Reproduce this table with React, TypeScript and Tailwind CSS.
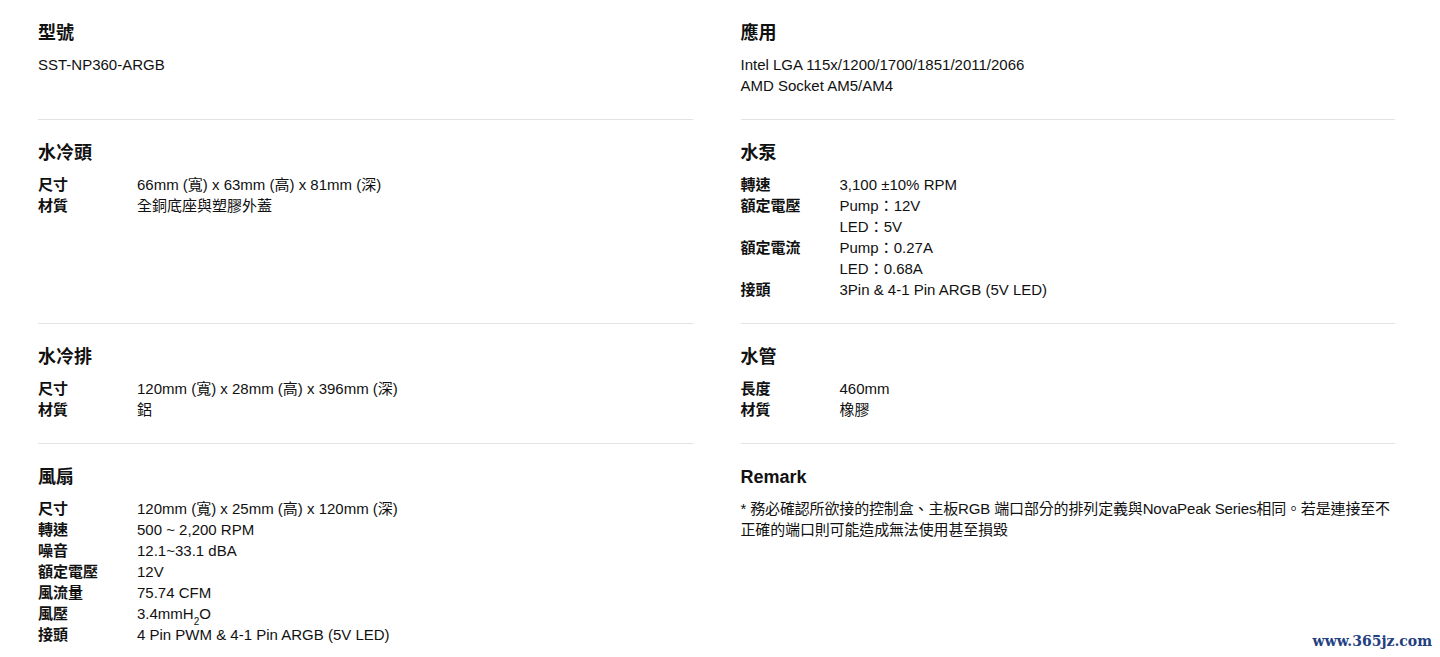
import React from 'react';

type Spec = { label?: string; value: React.ReactNode };
type Section = { title: string; specs?: Spec[]; lines?: React.ReactNode[]; tight?: boolean };

const rows: [Section, Section][] = [
  [
    { title: '型號', lines: ['SST-NP360-ARGB'] },
    { title: '應用', lines: ['Intel LGA 115x/1200/1700/1851/2011/2066', 'AMD Socket AM5/AM4'] },
  ],
  [
    {
      title: '水冷頭',
      specs: [
        { label: '尺寸', value: '66mm (寬) x 63mm (高) x 81mm (深)' },
        { label: '材質', value: '全銅底座與塑膠外蓋' },
      ],
    },
    {
      title: '水泵',
      specs: [
        { label: '轉速', value: '3,100 ±10% RPM' },
        { label: '額定電壓', value: 'Pump：12V' },
        { value: 'LED：5V' },
        { label: '額定電流', value: 'Pump：0.27A' },
        { value: 'LED：0.68A' },
        { label: '接頭', value: '3Pin & 4-1 Pin ARGB (5V LED)' },
      ],
    },
  ],
  [
    {
      title: '水冷排',
      specs: [
        { label: '尺寸', value: '120mm (寬) x 28mm (高) x 396mm (深)' },
        { label: '材質', value: '鋁' },
      ],
    },
    {
      title: '水管',
      specs: [
        { label: '長度', value: '460mm' },
        { label: '材質', value: '橡膠' },
      ],
    },
  ],
  [
    {
      title: '風扇',
      specs: [
        { label: '尺寸', value: '120mm (寬) x 25mm (高) x 120mm (深)' },
        { label: '轉速', value: '500 ~ 2,200 RPM' },
        { label: '噪音', value: '12.1~33.1 dBA' },
        { label: '額定電壓', value: '12V' },
        { label: '風流量', value: '75.74 CFM' },
        {
          label: '風壓',
          value: (
            <>
              3.4mmH<sub className="text-[10px] leading-none align-[-3px]">2</sub>O
            </>
          ),
        },
        { label: '接頭', value: '4 Pin PWM & 4-1 Pin ARGB (5V LED)' },
      ],
    },
    {
      title: 'Remark',
      tight: true,
      lines: ['* 務必確認所欲接的控制盒、主板RGB 端口部分的排列定義與NovaPeak Series相同。若是連接至不正確的端口則可能造成無法使用甚至損毀'],
    },
  ],
];

function SectionCell({ section, last }: { section: Section; last: boolean }) {
  return (
    <div className={`pt-[21px] pb-[23px] ${last ? '' : 'border-b border-[#e3e3e3]'}`}>
      <h2 className="text-[18px] leading-[24px] font-bold text-[#111] mb-[9px]">{section.title}</h2>
      {section.lines && (
        <div className={`text-[15px] leading-[21px] text-[#111] ${section.tight ? 'tracking-[-0.15px]' : ''}`}>
          {section.lines.map((l, i) => (
            <p key={i}>{l}</p>
          ))}
        </div>
      )}
      {section.specs && (
        <div className="text-[15px] leading-[21px] text-[#111]">
          {section.specs.map((s, i) => (
            <div key={i} className="flex">
              <span className="w-[99px] flex-shrink-0 font-bold">{s.label}</span>
              <span>{s.value}</span>
            </div>
          ))}
        </div>
      )}
    </div>
  );
}

export default function App() {
  return (
    <div
      className="relative w-[1440px] h-[657px] bg-white overflow-hidden"
      style={{ fontFamily: '"Liberation Sans", Arial, "Noto Sans CJK TC", sans-serif' }}
    >
      <div className="grid grid-cols-2 gap-x-12 pl-[38px] pr-[45px]">
        {rows.map((pair, r) =>
          pair.map((section, c) => (
            <SectionCell key={`${r}-${c}`} section={section} last={r === rows.length - 1} />
          ))
        )}
      </div>

      {/* watermark */}
      <span
        className="absolute right-[8px] bottom-[5px] text-[14px] font-bold text-[#23407f]"
        style={{ fontFamily: '"DejaVu Serif", "Liberation Serif", serif' }}
      >
        www.365jz.com
      </span>
    </div>
  );
}
